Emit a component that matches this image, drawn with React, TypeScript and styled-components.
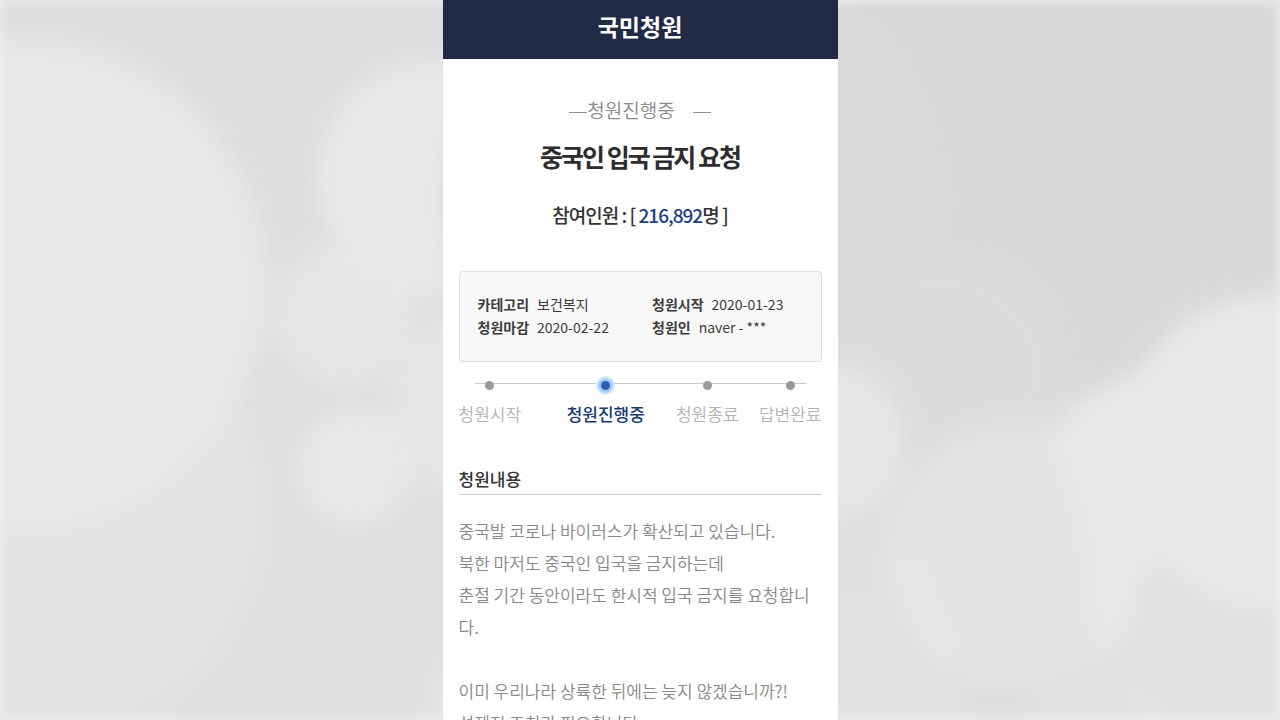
import React from "react";
import styled, { createGlobalStyle } from "styled-components";

const GlobalStyle = createGlobalStyle`
  * { box-sizing: border-box; }
  body {
    margin: 0;
    background: #dedede;
    font-family: "Noto Sans CJK KR", "Noto Sans", sans-serif;
    color: #333;
  }
  h1, h2, p, dl, dd, ol { margin: 0; padding: 0; }
`;

const Page = styled.div`
  display: grid;
  grid-template: 100vh / 1fr;
  overflow: hidden;
`;

const Backdrop = styled.svg`
  grid-area: 1 / 1;
  width: 100%;
  height: 100%;
`;

const Phone = styled.main`
  grid-area: 1 / 1;
  justify-self: center;
  width: 100%;
  max-width: 395px;
  background: #fff;
  overflow-y: auto;
  scrollbar-width: none;
  z-index: 1;
`;

const TopBar = styled.header`
  padding: 10px 16px 17px;
  background: #202a44;
  color: #fff;
  text-align: center;
  font-size: 23px;
  font-weight: 700;
  line-height: 32px;
`;

const Content = styled.div`
  padding: 37px 16px 0;
`;

const Status = styled.p`
  display: flex;
  justify-content: center;
  color: #8a8a8a;
  font-size: 19px;
  font-weight: 350;
  line-height: 28px;
`;

const Dash = styled.span<{ $gap?: boolean }>`
  width: 18px;
  height: 1px;
  margin-top: 16px;
  margin-left: ${(p) => (p.$gap ? 18 : 0)}px;
  background: #8e8e8e;
`;

const Title = styled.h1`
  margin-top: 14px;
  text-align: center;
  color: #2d2d2d;
  font-size: 25px;
  font-weight: 700;
  line-height: 36px;
  letter-spacing: -2px;
`;

const Count = styled.p`
  margin-top: 27px;
  text-align: center;
  font-size: 19px;
  font-weight: 500;
  line-height: 28px;
  letter-spacing: -1px;

  strong {
    color: #1c3f82;
    font-weight: 500;
  }
`;

const InfoBox = styled.dl`
  display: grid;
  grid-template-columns: 1fr 1fr;
  column-gap: 24px;
  margin-top: 42px;
  padding: 21px 18px 22px;
  border: 1px solid #dcdcdc;
  border-radius: 4px;
  background: #f8f8f8;
`;

const InfoItem = styled.div`
  display: flex;
  gap: 8px;
  font-size: 14px;
  line-height: 23px;
  color: #3c3c3c;
  white-space: nowrap;

  dt { font-weight: 700; }
`;

const Steps = styled.ol`
  position: relative;
  display: flex;
  margin-top: 15px;
  list-style: none;

  &::before {
    content: "";
    position: absolute;
    top: 6px;
    left: 16px;
    right: 16px;
    height: 1px;
    background: #c8c8c8;
  }
`;

const StepSlot = styled.li<{ $grow: number }>`
  position: relative;
  display: flex;
  flex: ${(p) => p.$grow} 0 auto;
  justify-content: flex-end;
`;

const Step = styled.div<{ $active: boolean }>`
  display: flex;
  flex-direction: column;
  align-items: center;
  gap: 8px;
  color: ${(p) => (p.$active ? "#1b3a70" : "#b3b3b3")};
  font-size: 17px;
  font-weight: ${(p) => (p.$active ? 500 : 350)};
  line-height: 24px;
`;

const Dot = styled.span<{ $active: boolean }>`
  width: 9px;
  height: 9px;
  margin: 4px;
  border-radius: 50%;
  background: ${(p) => (p.$active ? "#2c5fb3" : "#999")};
  box-shadow: ${(p) => (p.$active ? "0 0 0 3px #a4cdfb, 0 0 0 5px #d9ecff" : "none")};
`;

const SectionTitle = styled.h2`
  margin-top: 41px;
  padding-bottom: 3px;
  border-bottom: 1px solid #cfcfcf;
  font-size: 17px;
  font-weight: 500;
  line-height: 24px;
`;

const Article = styled.div`
  margin-top: 20px;
  color: #888;
  font-size: 17px;
  font-weight: 350;
  line-height: 32px;
  word-break: break-all;

  p + p { margin-top: 32px; }
`;

const info = [
  ["카테고리", "보건복지"],
  ["청원시작", "2020-01-23"],
  ["청원마감", "2020-02-22"],
  ["청원인", "naver - ***"],
];

const steps = [
  { label: "청원시작", grow: 0 },
  { label: "청원진행중", grow: 47, active: true },
  { label: "청원종료", grow: 32 },
  { label: "답변완료", grow: 21 },
];

function Bokeh() {
  return (
    <Backdrop viewBox="0 0 1280 720" preserveAspectRatio="xMidYMid slice" aria-hidden="true">
      <defs>
        <linearGradient id="left" x1="0" y1="0" x2="0" y2="1">
          <stop offset="0" stopColor="#dcdcdc" />
          <stop offset="1" stopColor="#dfdfdf" />
        </linearGradient>
        <linearGradient id="right" x1="0" y1="0" x2="0" y2="1">
          <stop offset="0.5" stopColor="#d8d8d8" />
          <stop offset="0.85" stopColor="#e1e1e1" />
        </linearGradient>
        <filter id="soft" x="-20%" y="-20%" width="140%" height="140%">
          <feGaussianBlur stdDeviation="12" />
        </filter>
        <filter id="edge" filterUnits="userSpaceOnUse" x="-20" y="-20" width="1320" height="760">
          <feGaussianBlur stdDeviation="4" />
        </filter>
      </defs>
      <rect width="640" height="720" fill="url(#left)" />
      <rect x="640" width="640" height="720" fill="url(#right)" />
      <g filter="url(#soft)">
        <circle cx="40" cy="510" r="232" fill="#e3e3e3" />
        <circle cx="20" cy="284" r="247" fill="#e8e8e8" />
        <path d="M-40 301 Q140 301 225 384 Q180 532 -40 532Z" fill="#e9e9e9" />
        <circle cx="490" cy="405" r="100" fill="#e6e6e6" />
        <circle cx="344" cy="316" r="72" fill="#e6e6e6" />
        <circle cx="435" cy="178" r="118" fill="#e9e9e9" />
        <circle cx="355" cy="468" r="58" fill="#e8e8e8" />
        <circle cx="500" cy="700" r="68" fill="#e6e6e6" />
        <circle cx="690" cy="200" r="247" fill="#dadada" />
        <circle cx="955" cy="368" r="110" fill="#dbdbdb" />
        <circle cx="826" cy="442" r="78" fill="#e7e7e7" />
        <circle cx="1013" cy="556" r="130" fill="#e4e4e4" />
        <path d="M900 555 Q930 660 965 665 Q925 600 915 560Z" fill="#eaeaea" />
        <circle cx="1275" cy="452" r="158" fill="#e9e9e9" />
        <path d="M1050 440 Q1060 405 1137 372 L1230 400 L1200 530 L1142 575 Q1130 640 1106 655 Q1090 630 1088 560 Q1080 490 1050 440Z" fill="#e9e9e9" />
        <ellipse cx="1000" cy="702" rx="36" ry="10" fill="#d9d9d9" />
        <path d="M1115 680 L1150 725 L1175 725Z" fill="#eaeaea" />
      </g>
      <rect width="1280" height="720" fill="none" stroke="#efefef" strokeWidth="6" filter="url(#edge)" />
    </Backdrop>
  );
}

export default function App() {
  return (
    <Page>
      <GlobalStyle />
      <Bokeh />
      <Phone>
        <TopBar>국민청원</TopBar>
        <Content>
          <Status>
            <Dash />
            청원진행중
            <Dash $gap />
          </Status>
          <Title>중국인 입국 금지 요청</Title>
          <Count>
            참여인원 : [ <strong>216,892</strong>명 ]
          </Count>
          <InfoBox>
            {info.map(([name, value]) => (
              <InfoItem key={name}>
                <dt>{name}</dt>
                <dd>{value}</dd>
              </InfoItem>
            ))}
          </InfoBox>
          <Steps>
            {steps.map(({ label, grow, active = false }) => (
              <StepSlot key={label} $grow={grow} aria-current={active ? "step" : undefined}>
                <Step $active={active}>
                  <Dot $active={active} />
                  {label}
                </Step>
              </StepSlot>
            ))}
          </Steps>
          <SectionTitle>청원내용</SectionTitle>
          <Article>
            <p>
              중국발 코로나 바이러스가 확산되고 있습니다.
              <br />
              북한 마저도 중국인 입국을 금지하는데
              <br />
              춘절 기간 동안이라도 한시적 입국 금지를 요청합니다.
            </p>
            <p>
              이미 우리나라 상륙한 뒤에는 늦지 않겠습니까?!
              <br />
              선제적 조치가 필요합니다.
            </p>
          </Article>
        </Content>
      </Phone>
    </Page>
  );
}
